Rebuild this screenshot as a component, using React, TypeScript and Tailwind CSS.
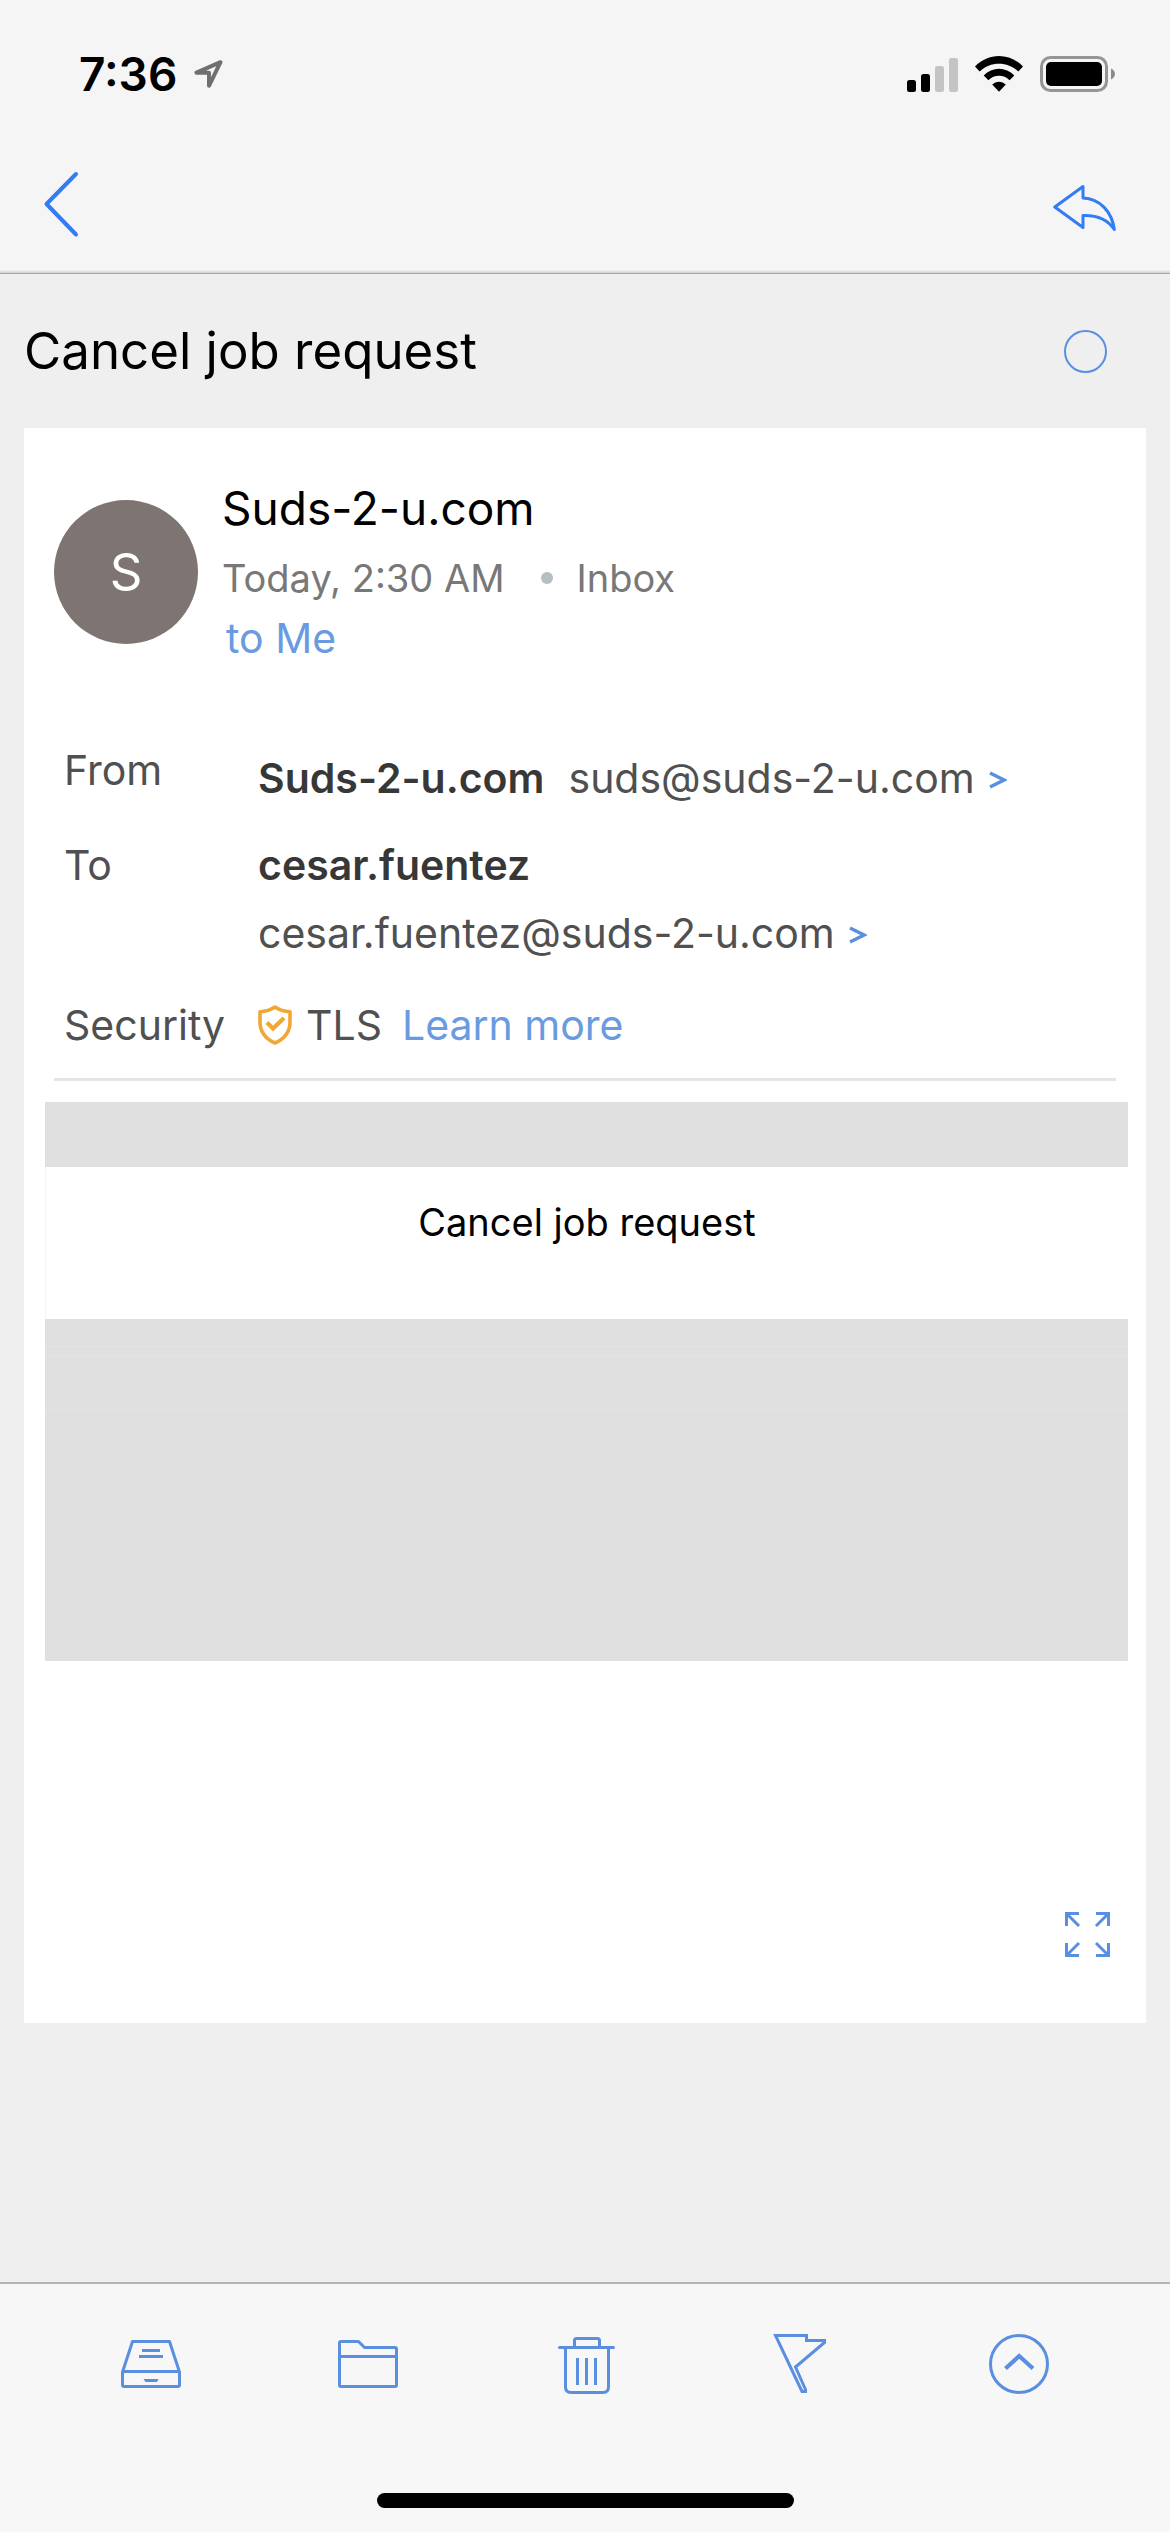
import React from "react";

function LocationIcon() {
  return (
    <svg width="30" height="30" viewBox="0 0 30 30" fill="none" stroke="#6f6f6f" strokeWidth="4" strokeLinejoin="round" aria-hidden="true">
      <path d="M26.500 3.200 2.500 13.700H15V26.800Z" />
    </svg>
  );
}

function SignalIcon() {
  return (
    <svg width="51" height="36" viewBox="0 0 51 36" aria-hidden="true">
      <rect x="0" y="24" width="9" height="12" rx="2.5" />
      <rect x="14" y="18" width="9" height="18" rx="2.5" />
      <rect x="28" y="10" width="9" height="26" rx="2.5" fill="#c4c4c4" />
      <rect x="42" y="2" width="9" height="34" rx="2.5" fill="#c4c4c4" />
    </svg>
  );
}

function WifiIcon() {
  return (
    <svg width="48" height="36" viewBox="0 0 48 36" aria-hidden="true">
      <path d="M0 10.6C13-3.5 35-3.5 48 10.6L43.3 15.6C33 5 15 5 4.7 15.6Z" />
      <path d="M8.7 19.4C17.2 10.5 30.8 10.5 39.3 19.4L34.6 24.2C28.8 18.4 19.2 18.4 13.4 24.2Z" />
      <path d="M17.2 28.6C21 24.7 27 24.7 30.8 28.6L24 35.8Z" />
    </svg>
  );
}

function BatteryIcon() {
  return (
    <svg width="75" height="36" viewBox="0 0 75 36" aria-hidden="true">
      <rect x="1.5" y="1.5" width="65" height="33" rx="9" fill="none" stroke="#959595" strokeWidth="3" />
      <rect x="6" y="6" width="56" height="24" rx="5" />
      <path d="M71 12.5C73.4 13.4 75 15.6 75 18S73.4 22.6 71 23.5Z" fill="#8a8a8a" />
    </svg>
  );
}

function BackIcon() {
  return (
    <svg width="36" height="68" viewBox="0 0 36 68" fill="none" stroke="#327cf6" strokeWidth="4" strokeLinecap="round" strokeLinejoin="round" aria-hidden="true">
      <path d="M33 4 3.5 34 33 64.5" />
    </svg>
  );
}

function ReplyIcon() {
  return (
    <svg width="64" height="68" viewBox="0 0 64 68" fill="none" stroke="#327cf6" strokeWidth="3" strokeLinejoin="round" aria-hidden="true">
      <path d="M30 16.5 1.8 37 30 57.500V45.500C44 45 55 50 61.300 59.500C59 42 47 28.500 30 28Z" />
    </svg>
  );
}

function Chevron() {
  return (
    <svg className="mt-1 shrink-0" width="18" height="18" viewBox="0 0 18 18" fill="none" stroke="#5a8fe0" strokeWidth="3.400" aria-hidden="true">
      <path d="M1 2 15 9 1 16" />
    </svg>
  );
}

function ShieldIcon() {
  return (
    <svg className="shrink-0" width="34" height="40" viewBox="0 0 34 40" fill="none" stroke="#f2a735" aria-hidden="true">
      <path d="M17 2C12.500 5 7.500 6.500 2 6.800V17C2 27 8 34 17 38C26 34 32 27 32 17V6.800C26.500 6.500 21.500 5 17 2Z" strokeWidth="3.600" strokeLinejoin="round" />
      <path d="M9 17.500 15 23.500 26 13" strokeWidth="4.200" />
    </svg>
  );
}

function ExpandIcon() {
  return (
    <svg width="45" height="45" viewBox="0 0 45 45" fill="none" stroke="#5a8fe0" strokeWidth="3" aria-hidden="true">
      <path d="M14 1.500H1.500V14M1.500 1.500 14 14M31 1.500H43.500V14M43.500 1.500 31 14M14 43.500H1.500V31M1.500 43.500 14 31M31 43.500H43.500V31M43.500 43.500 31 31" />
    </svg>
  );
}

function ToolIcon({ children }: { children: React.ReactNode }) {
  return (
    <svg width="60" height="60" viewBox="0 0 60 60" fill="none" stroke="#5a8fe0" strokeWidth="3" aria-hidden="true">
      {children}
    </svg>
  );
}

const tools = [
  {
    label: "Archive",
    icon: (
      <ToolIcon>
        <path strokeLinejoin="round" d="M11.500 7.500H48.500L58.500 38V51Q58.500 52.500 57 52.500H3Q1.500 52.500 1.500 51V38ZM1.500 37.500H58.500" />
        <path d="M21 16.500H39M18 22.500H42" />
        <path d="M22.500 45H37.500L36 48H24.500Z" fill="#5a8fe0" stroke="none" />
      </ToolIcon>
    ),
  },
  {
    label: "Move to folder",
    icon: (
      <ToolIcon>
        <path strokeLinejoin="round" d="M3 7.500H20.500L26.500 13.500H57Q58.500 13.500 58.500 15V51Q58.500 52.500 57 52.500H3Q1.500 52.500 1.500 51V9Q1.500 7.500 3 7.500ZM1.500 22.500H58.500" />
      </ToolIcon>
    ),
  },
  {
    label: "Delete",
    icon: (
      <ToolIcon>
        <path strokeLinecap="round" d="M4.500 13.500H58.500" />
        <path d="M19.500 13.500V6.500Q19.500 4.500 21.500 4.500H42.500Q44.500 4.500 44.500 6.500V13.500M10.500 13.500V53Q10.500 58.500 16 58.500H48Q53.500 58.500 53.500 53V13.500" />
        <path d="M22.500 24V51M31.500 24V51M40.500 24V51" />
      </ToolIcon>
    ),
  },
  {
    label: "Flag",
    icon: (
      <ToolIcon>
        <path d="M3.500 1.500H34.500V6.500H52.500V8.500L23.500 33 33.500 55.500V57.500H30Z" />
      </ToolIcon>
    ),
  },
  {
    label: "More",
    icon: (
      <ToolIcon>
        <circle cx="30" cy="30" r="28.500" />
        <path d="M16.500 34.500 30.200 22 44 34.500" strokeWidth="4.200" />
      </ToolIcon>
    ),
  },
];

function StatusBar() {
  return (
    <div className="flex h-[148px] items-center justify-between pr-[55px] pl-[79px]">
      <div className="flex items-center gap-[17px]">
        <span className="text-[46px] leading-[56px] font-semibold">7:36</span>
        <LocationIcon />
      </div>
      <div className="flex items-center gap-[17px]">
        <SignalIcon />
        <WifiIcon />
        <BatteryIcon />
      </div>
    </div>
  );
}

function MessageHeader() {
  return (
    <header className="flex items-start gap-6 px-[30px] pt-12">
      <div className="mt-6 flex size-36 shrink-0 items-center justify-center rounded-full bg-[#7e7472] text-[51px] text-white">S</div>
      <div>
        <h2 className="mb-[6px] text-[46px] leading-[64px]">Suds-2-u.com</h2>
        <p className="flex items-center text-[38px] leading-[64px] text-[#787878]">
          <span>Today, 2:30 AM</span>
          <span className="mr-6 ml-9 size-3 rounded-full bg-[#b4bfc1]" />
          <span>Inbox</span>
        </p>
        <button type="button" className="ml-1 block text-[41px] leading-[56px] text-[#6a9ae0]">
          to Me
        </button>
      </div>
    </header>
  );
}

function Details() {
  return (
    <dl className="mt-[76px] px-10 text-[41px] leading-[56px] text-[#505050]">
      <div className="flex">
        <dt className="w-[194px] shrink-0">From</dt>
        <dd className="flex items-center pt-2">
          <b className="font-semibold text-[#373737]">Suds-2-u.com</b>
          <a href="mailto:suds@suds-2-u.com" className="ml-6 flex items-center gap-[14px]">
            suds@suds-2-u.com
            <Chevron />
          </a>
        </dd>
      </div>
      <div className="mt-[31px] flex">
        <dt className="w-[194px] shrink-0">To</dt>
        <dd className="flex flex-col gap-3">
          <b className="font-semibold text-[#373737]">cesar.fuentez</b>
          <a href="mailto:cesar.fuentez@suds-2-u.com" className="flex items-center gap-[14px]">
            cesar.fuentez@suds-2-u.com
            <Chevron />
          </a>
        </dd>
      </div>
      <div className="mt-9 flex">
        <dt className="w-[194px] shrink-0">Security</dt>
        <dd className="flex items-center">
          <ShieldIcon />
          <span className="ml-[14px]">TLS</span>
          <a href="#tls" className="ml-5 text-[#6a9ae0]">
            Learn more
          </a>
        </dd>
      </div>
    </dl>
  );
}

export default function App() {
  return (
    <div className="flex min-h-screen flex-col bg-[#efefef] font-['Inter',sans-serif] text-black">
      <header className="border-b border-[#a8a8a8] bg-[#f5f5f5]">
        <StatusBar />
        <nav className="flex h-[122px] items-center justify-between pr-[53px] pb-[10px] pl-[43px]">
          <button type="button" aria-label="Back">
            <BackIcon />
          </button>
          <button type="button" aria-label="Reply">
            <ReplyIcon />
          </button>
        </nav>
        <div className="h-[3px] bg-linear-to-b from-[#f3f3f3] to-[#cfcfcf]" />
      </header>

      <main className="flex-1">
        <div className="flex h-[154px] items-center justify-between pr-[63px] pl-6">
          <h1 className="text-[51px] leading-[64px]">Cancel job request</h1>
          <button type="button" aria-label="Mark as unread" className="size-[43px] rounded-full border-2 border-[#5a8fe0]" />
        </div>

        <article className="mx-6 bg-white">
          <MessageHeader />
          <Details />
          <hr className="mx-[30px] mt-[25px] h-[3px] border-0 bg-[#e5e5e5]" />
          <section className="mt-[21px] mr-[18px] ml-[21px]">
            <div className="h-[65px] bg-[#e0e0e0]" />
            <p className="border-l border-[#f4f4f4] pt-[27px] pb-[69px] text-center text-[38px] leading-[56px]">Cancel job request</p>
            <div className="flex flex-col gap-px bg-[#e4e4e4]">
              <div className="h-[27px] bg-[#e0e0e0]" />
              <div className="h-2 bg-[#e0e0e0]" />
              <div className="h-[53px] bg-[#e0e0e0]" />
              <div className="h-[251px] bg-[#e0e0e0]" />
            </div>
          </section>
          <div className="flex justify-end pt-[251px] pr-9 pb-[66px]">
            <button type="button" aria-label="Expand message">
              <ExpandIcon />
            </button>
          </div>
        </article>
      </main>

      <footer className="border-t-2 border-[#b4b4b4] bg-[#f7f7f7]">
        <div className="flex justify-between px-[121px] pt-[50px]">
          {tools.map((tool) => (
            <button key={tool.label} type="button" aria-label={tool.label}>
              {tool.icon}
            </button>
          ))}
        </div>
        <div className="flex justify-center pt-[99px] pb-6">
          <div className="h-[15px] w-[417px] rounded-full bg-black" />
        </div>
      </footer>
    </div>
  );
}
